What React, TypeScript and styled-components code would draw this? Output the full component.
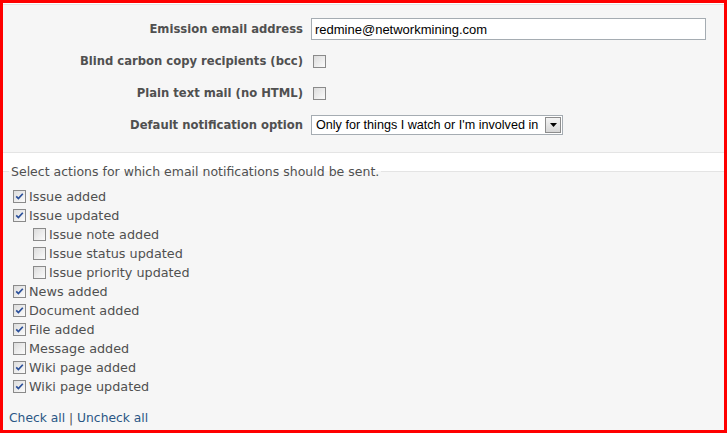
import React from 'react';
import styled, { createGlobalStyle } from 'styled-components';

const GlobalStyle = createGlobalStyle`
  html, body {
    margin: 0;
    padding: 0;
    background: #ffffff;
  }
  body {
    font-family: 'DejaVu Sans', Verdana, sans-serif;
    color: #505050;
  }
`;

const Frame = styled.div`
  box-sizing: border-box;
  width: 727px;
  height: 433px;
  border: 3px solid #ff0000;
  display: flex;
  flex-flow: column;
  overflow: hidden;
`;

const SettingsBox = styled.div`
  margin-top: 1px;
  padding: 8px 0 11px;
  background: #f6f6f6;
  border-top: 1px solid #e4e4e4;
  border-bottom: 1px solid #e4e4e4;
  display: grid;
  grid-template-columns: 300px 1fr;
  grid-auto-rows: 32px;
  column-gap: 8px;
  align-items: center;
`;

const Label = styled.label`
  text-align: right;
  font-weight: bold;
  font-size: 11.6px;
  color: #505050;
`;

const CheckCell = styled.div`
  padding-left: 2px;
  display: flex;
  align-items: center;
`;

const TextInput = styled.div`
  box-sizing: border-box;
  width: 395px;
  height: 22px;
  border: 1px solid #a5acb2;
  background: #ffffff;
  padding: 0 3px;
  display: flex;
  align-items: center;
  font-family: 'Liberation Sans', Arial, sans-serif;
  font-size: 13px;
  color: #000000;
`;

const Select = styled.div`
  box-sizing: border-box;
  width: 252px;
  height: 20px;
  border: 1px solid #a5acb2;
  background: #ffffff;
  display: flex;
  align-items: center;
  justify-content: space-between;
  padding-left: 4px;
  white-space: nowrap;
  font-family: 'Liberation Sans', Arial, sans-serif;
  font-size: 12.6px;
  color: #000000;
`;

const SelectButton = styled.span`
  box-sizing: border-box;
  flex: none;
  width: 16px;
  height: 16px;
  margin-right: 1px;
  border: 1px solid #8d8d8d;
  background: linear-gradient(#f4f4f4, #d6d6d6);
  display: flex;
  align-items: center;
  justify-content: center;
`;

const Box = styled.span`
  box-sizing: border-box;
  flex: none;
  width: 13px;
  height: 13px;
  border: 1px solid #8a8a8a;
  background: linear-gradient(135deg, #dcdcdc, #fbfbfb);
  display: inline-flex;
  align-items: center;
  justify-content: center;
`;

const Fieldset = styled.fieldset`
  flex: 1;
  margin: 11px 0 0;
  padding: 8px 0 0 6px;
  border: none;
  border-top: 1px solid #e4e4e4;
  background: #f6f6f6;
  min-width: 0;
`;

const Legend = styled.legend`
  padding: 0 2px;
  font-size: 12.5px;
  line-height: 15px;
  color: #505050;
`;

const List = styled.div`
  margin-left: 4px;
  display: flex;
  flex-flow: column;
`;

const Item = styled.label<{ $indent?: boolean }>`
  display: flex;
  align-items: center;
  gap: 3px;
  height: 19px;
  padding-left: ${(p) => (p.$indent ? '20px' : '0')};
  font-size: 12.8px;
  color: #505050;
`;

const Links = styled.p`
  margin: 15px 0 0;
  font-size: 12.3px;
  line-height: 15px;
  color: #505050;
`;

const Link = styled.a`
  color: #2a5685;
  text-decoration: none;
`;

const Checkbox: React.FC<{ checked?: boolean }> = ({ checked }) => (
  <Box>
    {checked && (
      <svg width="9" height="9" viewBox="0 0 9 9">
        <path d="M1.2 4.4 L3.4 6.6 L7.8 1.8" fill="none" stroke="#2a4f9a" strokeWidth="1.7" />
      </svg>
    )}
  </Box>
);

const actions: { label: string; checked: boolean; indent?: boolean }[] = [
  { label: 'Issue added', checked: true },
  { label: 'Issue updated', checked: true },
  { label: 'Issue note added', checked: false, indent: true },
  { label: 'Issue status updated', checked: false, indent: true },
  { label: 'Issue priority updated', checked: false, indent: true },
  { label: 'News added', checked: true },
  { label: 'Document added', checked: true },
  { label: 'File added', checked: true },
  { label: 'Message added', checked: false },
  { label: 'Wiki page added', checked: true },
  { label: 'Wiki page updated', checked: true },
];

const App: React.FC = () => {
  return (
    <>
      <GlobalStyle />
      <Frame>
        <SettingsBox>
          <Label>Emission email address</Label>
          <TextInput>redmine@networkmining.com</TextInput>
          <Label>Blind carbon copy recipients (bcc)</Label>
          <CheckCell>
            <Checkbox />
          </CheckCell>
          <Label>Plain text mail (no HTML)</Label>
          <CheckCell>
            <Checkbox />
          </CheckCell>
          <Label>Default notification option</Label>
          <Select>
            Only for things I watch or I'm involved in
            <SelectButton>
              <svg width="7" height="4" viewBox="0 0 7 4">
                <path d="M0 0 H7 L3.5 4 Z" fill="#000" />
              </svg>
            </SelectButton>
          </Select>
        </SettingsBox>
        <Fieldset>
          <Legend>Select actions for which email notifications should be sent.</Legend>
          <List>
            {actions.map((a) => (
              <Item key={a.label} $indent={a.indent}>
                <Checkbox checked={a.checked} />
                {a.label}
              </Item>
            ))}
          </List>
          <Links>
            <Link href="#">Check all</Link> | <Link href="#">Uncheck all</Link>
          </Links>
        </Fieldset>
      </Frame>
    </>
  );
};

export default App;
